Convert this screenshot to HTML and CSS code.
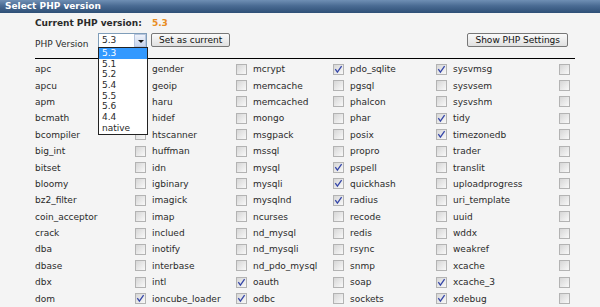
FILE: index.html
```html
<!DOCTYPE html>
<html lang="en">
<head>
  <meta charset="UTF-8" />
  <title>Select PHP version</title>
  <link rel="stylesheet" href="styles.css">
</head>
<body>
  <div class="titlebar">Select PHP version</div>

  <div class="panel">
    <div class="current">Current PHP version: <span class="ver">5.3</span></div>

    <div class="toolbar">
      <label class="field-label">PHP Version</label>
      <div class="select">
        <span class="select-value">5.3</span>
        <span class="select-arrow"></span>
        <ul class="options">
          <li class="active">5.3</li>
          <li>5.1</li>
          <li>5.2</li>
          <li>5.4</li>
          <li>5.5</li>
          <li>5.6</li>
          <li>4.4</li>
          <li>native</li>
        </ul>
      </div>
      <button class="btn">Set as current</button>
      <button class="btn settings">Show PHP Settings</button>
    </div>

    <div class="extensions" id="extensions"></div>
  </div>

  <script>
    const columns = [
      ['apc', 'apcu', 'apm', 'bcmath', 'bcompiler', 'big_int', 'bitset', 'bloomy', 'bz2_filter', 'coin_acceptor', 'crack', 'dba', 'dbase', 'dbx', 'dom'],
      ['gender', 'geoip', 'haru', 'hidef', 'htscanner', 'huffman', 'idn', 'igbinary', 'imagick', 'imap', 'inclued', 'inotify', 'interbase', 'intl', 'ioncube_loader'],
      ['mcrypt', 'memcache', 'memcached', 'mongo', 'msgpack', 'mssql', 'mysql', 'mysqli', 'mysqlnd', 'ncurses', 'nd_mysql', 'nd_mysqli', 'nd_pdo_mysql', 'oauth', 'odbc'],
      ['pdo_sqlite', 'pgsql', 'phalcon', 'phar', 'posix', 'propro', 'pspell', 'quickhash', 'radius', 'recode', 'redis', 'rsync', 'snmp', 'soap', 'sockets'],
      ['sysvmsg', 'sysvsem', 'sysvshm', 'tidy', 'timezonedb', 'trader', 'translit', 'uploadprogress', 'uri_template', 'uuid', 'wddx', 'weakref', 'xcache', 'xcache_3', 'xdebug']
    ];

    const enabled = ['ioncube_loader', 'oauth', 'odbc', 'pdo_sqlite', 'pspell', 'quickhash', 'radius',
                     'sysvmsg', 'tidy', 'timezonedb', 'xcache_3', 'xdebug'];

    const tick = '<svg viewBox="0 0 11 11" width="11" height="11"><path d="M2.3 5.2 L4.4 8.2 L8.6 2.2" fill="none" stroke="#3546a8" stroke-width="1.3"/></svg>';

    const grid = document.getElementById('extensions');

    for (let r = 0; r < 15; r++) {
      for (let c = 0; c < 5; c++) {
        const name = document.createElement('div');
        name.className = 'ext-name';
        name.textContent = columns[c][r];
        grid.appendChild(name);

        // checkbox sits in front of the next column's name
        const box = document.createElement('div');
        box.className = 'ext-box';
        const next = c < 4 ? columns[c + 1][r] : null;
        box.innerHTML = '<span class="cb">' + (enabled.includes(next) ? tick : '') + '</span>';
        grid.appendChild(box);
      }
    }
  </script>
</body>
</html>
```

FILE: styles.css
```css
body {
  margin: 0;
  background: #f4f4f4;
  font-family: 'DejaVu Sans', Verdana, sans-serif;
  font-size: 9px;
  color: #2a2a2a;
}

.titlebar {
  height: 13px;
  line-height: 13px;
  padding-left: 5px;
  color: #fff;
  font-weight: bold;
  background: linear-gradient(#6f8fb4, #4a6b93 45%, #2e4f76);
}

.panel {
  margin: 0 25px 0 35px;
}

.current {
  margin-top: 4px;
  line-height: 12px;
  font-weight: bold;
}

.current .ver {
  color: #e88c22;
  margin-left: 7px;
}

.toolbar {
  display: flex;
  align-items: flex-start;
  height: 15px;
  margin-top: 4px;
  padding-bottom: 10px;
  border-bottom: 1px solid #000;
}

.field-label {
  width: 63px;
  align-self: flex-end;
  line-height: 9px;
  margin-bottom: -1px;
}

.select {
  position: relative;
  display: flex;
  width: 49px;
  height: 15px;
  box-sizing: border-box;
  border: 1px solid #7f9db9;
  background: #fff;
}

.select-value {
  flex: 1;
  padding-left: 3px;
  line-height: 13px;
}

.select-arrow {
  position: relative;
  width: 12px;
  box-sizing: border-box;
  border: 1px solid #b7c5de;
  background: linear-gradient(#eef2fa, #c7d4ec);
}

.select-arrow::after {
  content: '';
  position: absolute;
  left: 3px;
  top: 5px;
  border-left: 3px solid transparent;
  border-right: 3px solid transparent;
  border-top: 3px solid #111;
}

.options {
  position: absolute;
  top: 13px;
  left: -1px;
  width: 48px;
  margin: 0;
  padding: 0;
  list-style: none;
  border: 1px solid #222;
  background: #fff;
  z-index: 2;
}

.options li {
  height: 10.7px;
  line-height: 10.7px;
  padding-left: 3px;
}

.options li.active {
  background: #3399ff;
  color: #fff;
}

.btn {
  height: 14px;
  margin-left: 4px;
  padding: 0 7px;
  font: inherit;
  line-height: 12px;
  color: #111;
  border: 1px solid #777;
  border-radius: 2px;
  background: linear-gradient(#fafafa, #e0e0e0);
}

.btn.settings {
  margin-left: auto;
  margin-right: 7px;
}

.extensions {
  display: grid;
  grid-template-columns: 100px 17px 84px 17px 80px 17px 86px 17px 106px 16px;
  grid-auto-rows: 16.4px;
  align-items: center;
  padding-top: 2px;
}

.ext-name {
  white-space: nowrap;
}

.ext-box {
  display: flex;
  align-items: center;
}

.cb {
  display: block;
  width: 11px;
  height: 11px;
  box-sizing: border-box;
  border: 1px solid #b3b3b3;
  background: linear-gradient(135deg, #d6d6d6, #f9f9f9);
}

.cb svg {
  display: block;
  margin: -1px;
}
```
